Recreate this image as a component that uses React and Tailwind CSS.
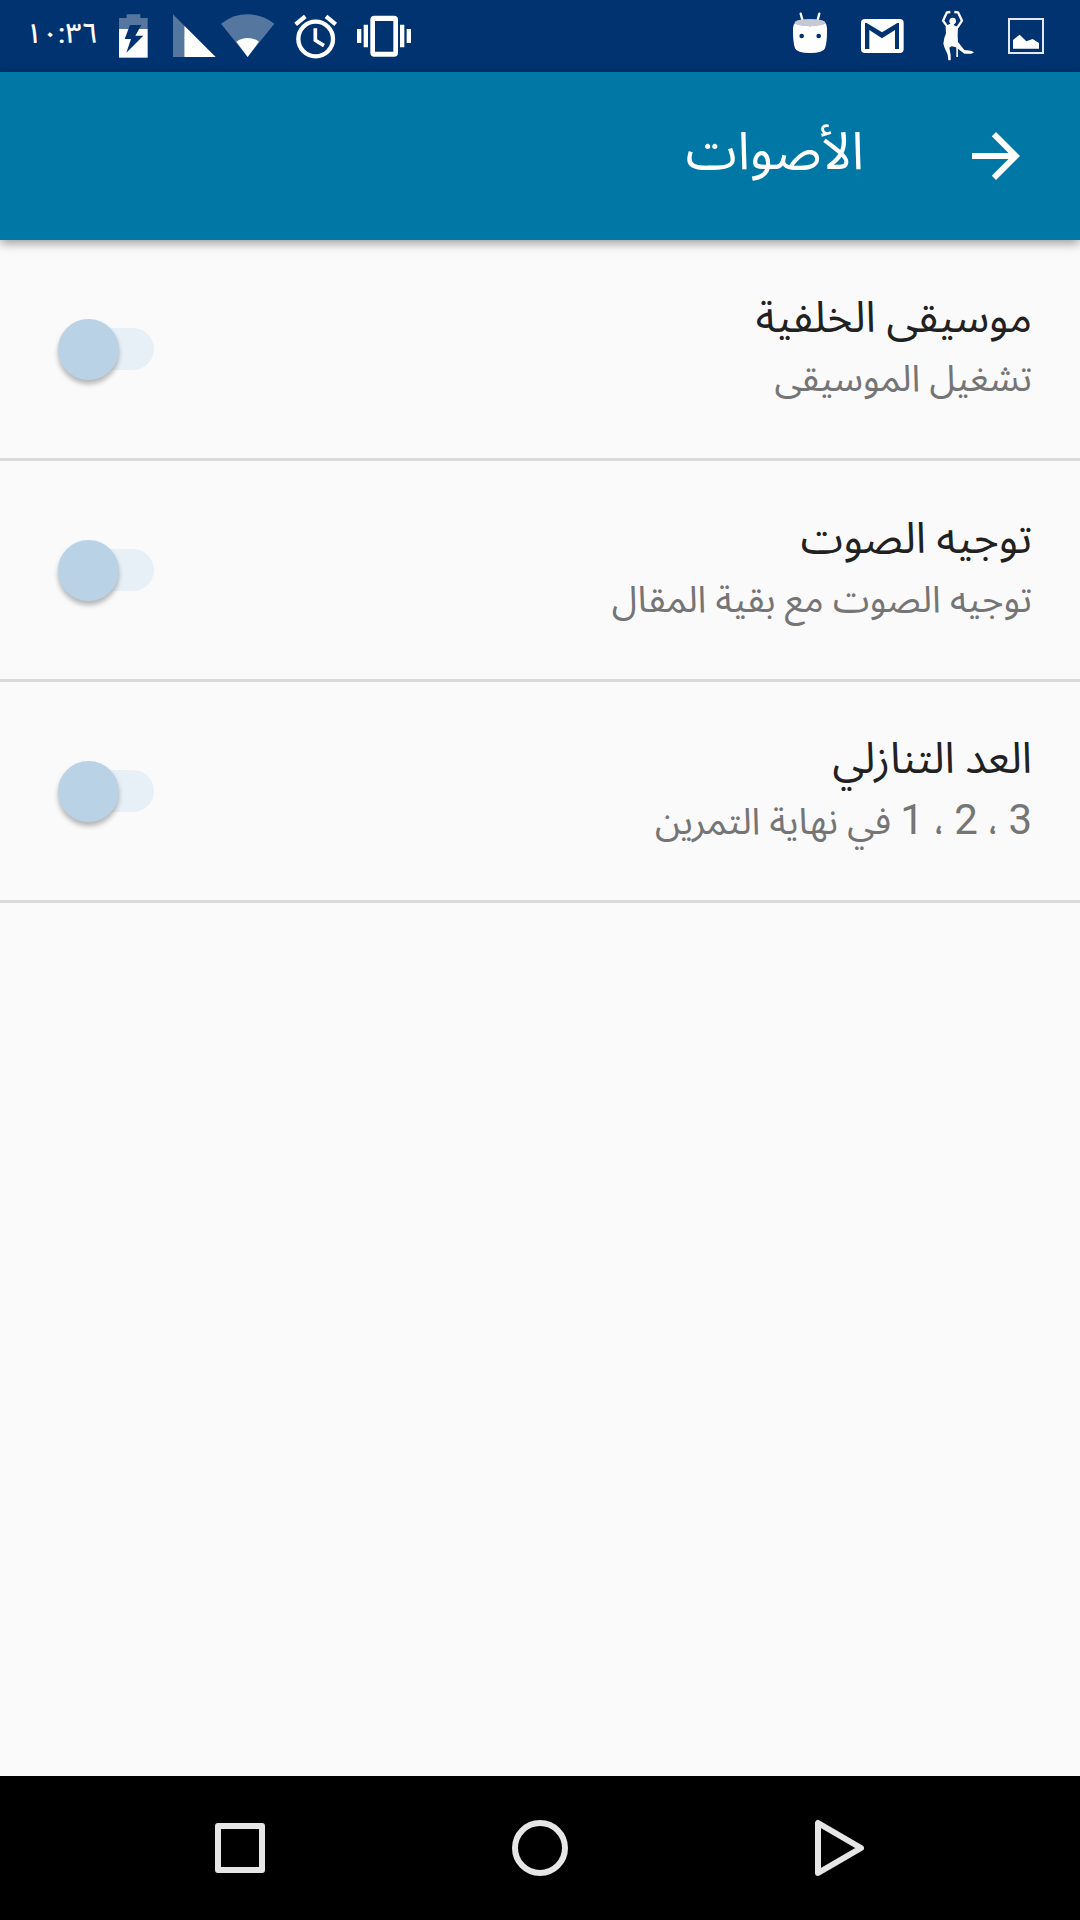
import React from "react";

const SETTINGS = [
  { id: "music", title: "موسيقى الخلفية", summary: "تشغيل الموسيقى" },
  { id: "voice", title: "توجيه الصوت", summary: "توجيه الصوت مع بقية المقال" },
  { id: "countdown", title: "العد التنازلي", summary: "3 ، 2 ، 1 في نهاية التمرين" },
];

function BatteryIcon() {
  return (
    <svg className="h-[72px] w-[52px]" viewBox="324 0 156 216" aria-label="البطارية">
      <path fill="#fff" fillOpacity=".33" d="M380 43h41v11h22v33h-86V54h23z" />
      <path fill="#fff" d="M357 87h86v86h-86z" />
      <path fill="#003370" d="M390 75h34l-18 32h24l-51 51 14-41h-19z" />
    </svg>
  );
}

function SignalIcon() {
  return (
    <svg className="h-[72px] w-[58px]" viewBox="0 0 174 216" aria-label="الشبكة">
      <path fill="#fff" fillOpacity=".33" d="M39 43l34 34v94H39z" />
      <path fill="#fff" d="M73 77l94 94H73z" />
    </svg>
  );
}

function WifiIcon() {
  return (
    <svg className="h-[72px] w-[62px]" viewBox="174 0 186 216" aria-label="واي فاي">
      <path fill="#fff" fillOpacity=".33" d="M183 71q36-28 80-28t80 28l-80 100z" />
      <path fill="#fff" d="M229 125q15-11 34-11t34 11l-34 46z" />
    </svg>
  );
}

function AlarmIcon() {
  return (
    <svg className="h-[72px] w-[66px]" viewBox="360 0 198 216" fill="none" stroke="#fff" aria-label="المنبه">
      <circle cx="467" cy="117" r="52" strokeWidth="13" />
      <path strokeWidth="11" d="M466 85v36l26 16" />
      <path strokeWidth="13" d="M407 73l29-24M498 49l29 24" />
    </svg>
  );
}

function VibrateIcon() {
  return (
    <svg className="h-[72px] w-[74px]" viewBox="558 0 222 216" fill="#fff" aria-label="الاهتزاز">
      <path
        fillRule="evenodd"
        d="M643 47h59q12 0 12 12v99q0 12-12 12h-59q-12 0-12-12V59q0-12 12-12zm2 16v92h55V63z"
      />
      <path d="M591 87h13v42h-13zM611 74h13v68h-13zM720 74h13v68h-13zM740 87h13v42h-13z" />
    </svg>
  );
}

function AndroidIcon() {
  return (
    <svg className="h-[72px] w-[68px]" viewBox="18 0 204 216" aria-label="أندرويد">
      <path stroke="#fff" strokeWidth="7" strokeLinecap="round" d="M92 41l6 22M148 41l-6 22" />
      <path fill="#fff" d="M75 69q45 19 91 0 6 6 5 28 0 30-6 48-5 14-45 14t-45-14q-6-18-6-48-1-22 6-28z" />
      <ellipse cx="120" cy="68" rx="46" ry="11" fill="#c6c9d3" />
      <circle cx="95" cy="108" r="7" fill="#003370" />
      <circle cx="146" cy="108" r="7" fill="#003370" />
    </svg>
  );
}

function MailIcon() {
  return (
    <svg className="h-[72px] w-[76px]" viewBox="222 0 228 216" aria-label="البريد">
      <rect x="273" y="57" width="128" height="102" rx="12" fill="#fff" />
      <path fill="#003370" d="M285 147V69h5l46 28 46-28h5v78h-12V90l-39 25-38-25v57z" />
    </svg>
  );
}

function PersonIcon() {
  return (
    <svg className="h-[72px] w-[72px]" viewBox="450 0 216 216" aria-label="التمرين">
      <g fill="none" stroke="#fff" strokeWidth="7" strokeLinejoin="round">
        <path d="M541 36l-10 1-12 25 15 21" />
        <path d="M553 36l11 1 12 25-14 21" />
      </g>
      <circle cx="548" cy="63" r="10" fill="#fff" />
      <path
        fill="#fff"
        d="M544 70h8v6l12 5-1 25 1 20 19 24 20 2 9 5-8 4h-21l-25-19-13-3-7 4 4 22v16h-7l-2-17-9-20-4-13 3-17 5-14-1-19 4-5z"
      />
      <path fill="#fff" d="M559 140h5v31h-5z" />
    </svg>
  );
}

function PictureIcon() {
  return (
    <svg className="h-[72px] w-[68px]" viewBox="666 0 204 216" aria-label="صورة">
      <rect x="717" y="57" width="102" height="102" fill="none" stroke="#e3e9f3" strokeWidth="6" />
      <path fill="#fff" d="M729 146v-26l20-16 20 20 19-7 19 12v17z" />
    </svg>
  );
}

function StatusBar() {
  return (
    <div dir="ltr" className="flex h-[72px] items-center justify-between bg-[#003370] pl-[26px] pr-5">
      <div className="flex items-center">
        <time className="w-[82px] pb-1 text-[28px] font-medium leading-[68px] text-white">١٠:٣٦</time>
        <BatteryIcon />
        <SignalIcon />
        <WifiIcon />
        <AlarmIcon />
        <VibrateIcon />
      </div>
      <div className="flex items-center">
        <AndroidIcon />
        <MailIcon />
        <PersonIcon />
        <PictureIcon />
      </div>
    </div>
  );
}

function AppBar() {
  return (
    <header className="z-10 flex h-[168px] items-center gap-24 bg-[#0077a4] px-12 text-white shadow-[0_3px_10px_rgba(0,0,0,0.4)]">
      <button type="button" aria-label="رجوع">
        <svg className="size-[72px]" viewBox="0 0 24 24" fill="currentColor" aria-hidden="true">
          <path d="M12 4l-1.410 1.410L16.170 11H4v2h12.170l-5.580 5.590L12 20l8-8z" />
        </svg>
      </button>
      <h1 className="pb-2 text-[52px] leading-[72px]">الأصوات</h1>
    </header>
  );
}

function Summary({ text }) {
  return text.split(/(\d)/).map((part, index) =>
    /^\d$/.test(part) ? (
      <span key={index} className="text-[42px]">
        {part}
      </span>
    ) : (
      part
    ),
  );
}

function SettingRow({ item }) {
  return (
    <li className="flex min-h-[221px] items-center justify-between border-b-[3px] border-[#dadada] pl-[58px] pr-12">
      <label htmlFor={item.id} className="flex flex-col pb-0.5">
        <span className="text-[43px] leading-[62px] text-[#212121]">{item.title}</span>
        <span className="text-[37px] leading-[62px] text-[#757575]">
          <Summary text={item.summary} />
        </span>
      </label>
      <input
        id={item.id}
        type="checkbox"
        role="switch"
        defaultChecked
        className="relative h-[61px] w-24 cursor-pointer appearance-none before:absolute before:left-2 before:right-0 before:top-[9px] before:h-[42px] before:rounded-full before:bg-[#e8f0f7] after:absolute after:right-0 after:top-0 after:size-[61px] after:rounded-full after:bg-[#bad2e6] after:shadow-[0_4px_5px_rgba(0,0,0,0.28)] checked:after:left-0 checked:after:right-auto"
      />
    </li>
  );
}

function NavBar() {
  return (
    <nav dir="ltr" className="flex h-36 items-center bg-black px-[90px]">
      <button type="button" aria-label="التطبيقات الأخيرة" className="flex flex-1 justify-center">
        <svg
          className="size-[72px]"
          viewBox="0 0 72 72"
          fill="none"
          stroke="#e6e6e6"
          strokeWidth="6"
          strokeLinejoin="round"
          aria-hidden="true"
        >
          <path d="M14 14h44v44H14z" />
        </svg>
      </button>
      <button type="button" aria-label="الشاشة الرئيسية" className="flex flex-1 justify-center">
        <svg className="size-[72px]" viewBox="0 0 72 72" fill="none" stroke="#e6e6e6" strokeWidth="6" aria-hidden="true">
          <circle cx="36" cy="36" r="25" />
        </svg>
      </button>
      <button type="button" aria-label="السابق" className="flex flex-1 justify-center">
        <svg
          className="size-[72px]"
          viewBox="0 0 72 72"
          fill="none"
          stroke="#e6e6e6"
          strokeWidth="6"
          strokeLinejoin="round"
          aria-hidden="true"
        >
          <path d="M14 11v50l43-25z" />
        </svg>
      </button>
    </nav>
  );
}

export default function App() {
  return (
    <div
      dir="rtl"
      lang="ar"
      className="flex min-h-screen flex-col bg-[#fafafa] font-['Roboto','Noto_Sans_Arabic','DejaVu_Sans',sans-serif]"
    >
      <StatusBar />
      <AppBar />
      <main className="flex-1">
        <ul>
          {SETTINGS.map((item) => (
            <SettingRow key={item.id} item={item} />
          ))}
        </ul>
      </main>
      <NavBar />
    </div>
  );
}
